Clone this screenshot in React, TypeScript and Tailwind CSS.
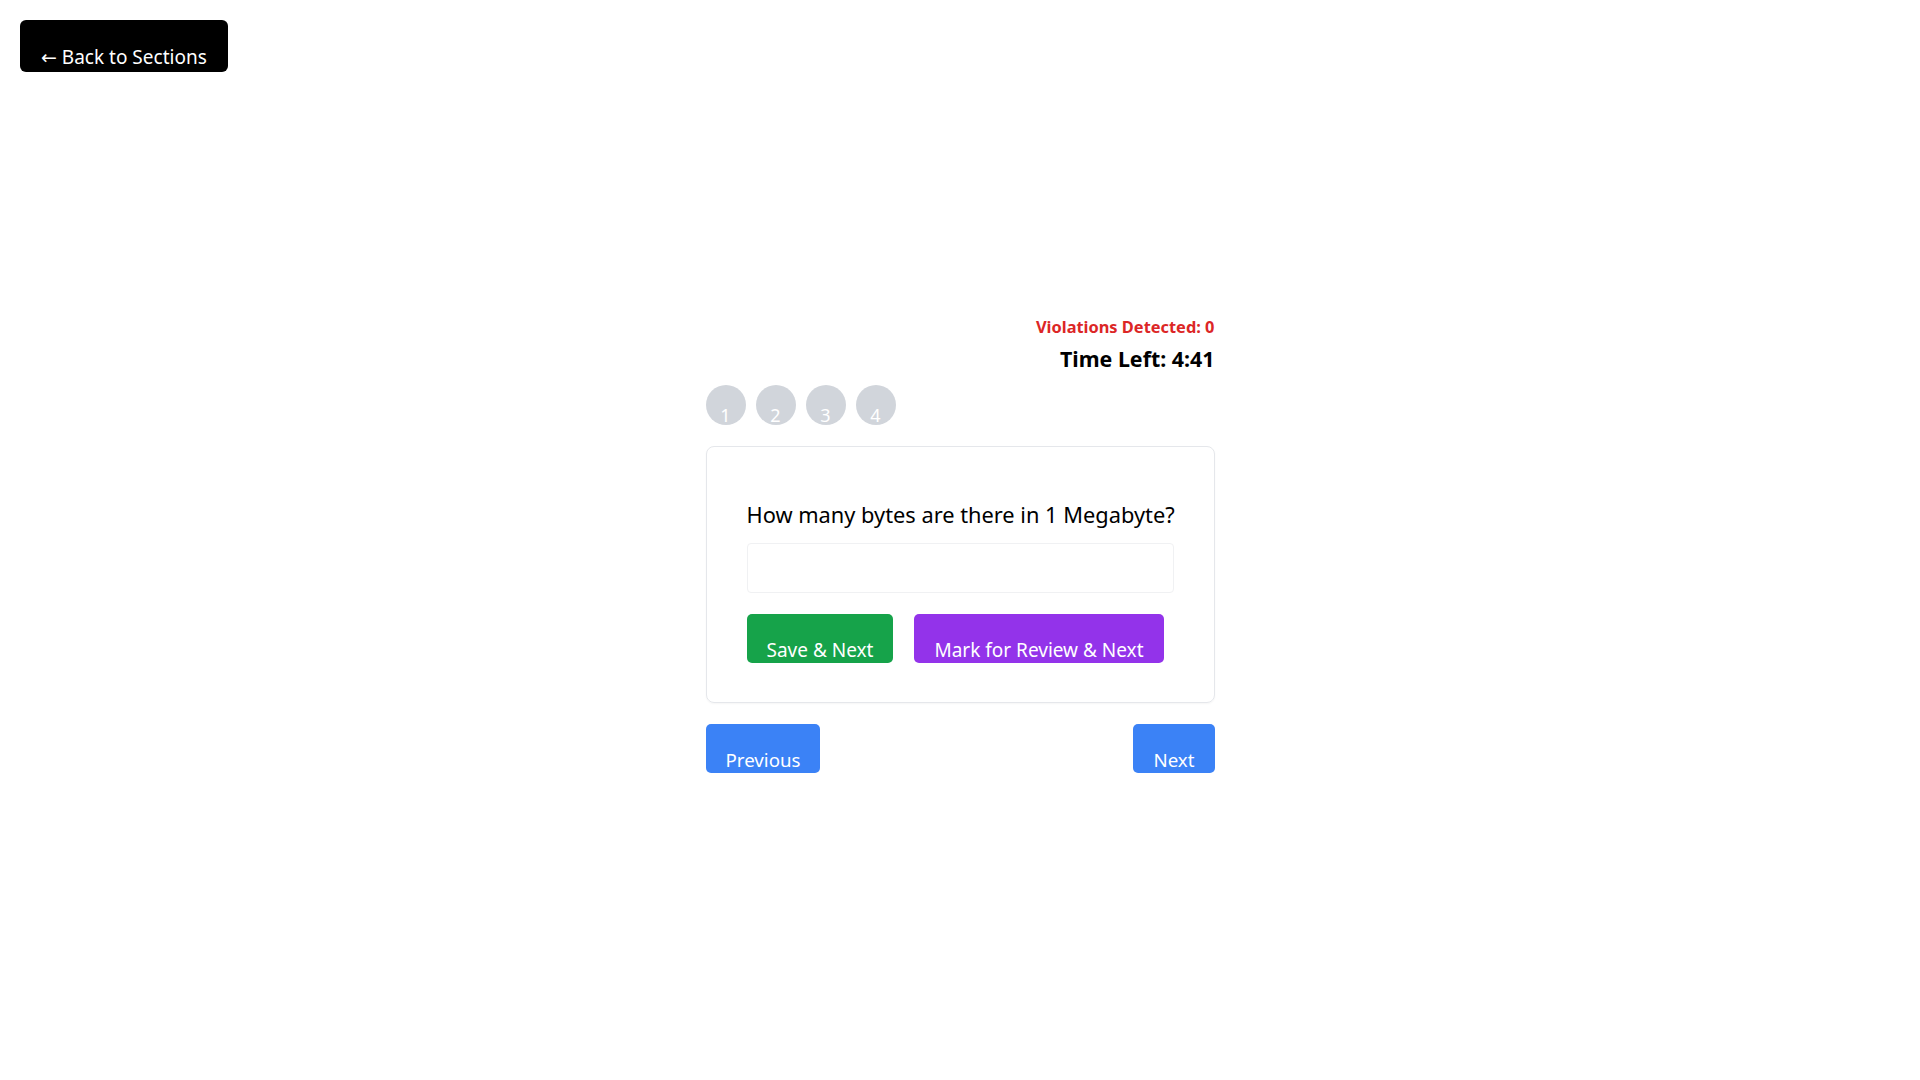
import React from "react";

export default function App() {
  return (
    <div className="min-h-screen bg-white font-['Noto_Sans',sans-serif] text-black">
      <div className="px-5 pt-5">
        <button className="h-[52px] whitespace-nowrap rounded-[6px] bg-black px-[21px] pt-[22px] text-[19px] leading-[20px] text-white">
          <span className="font-['DejaVu_Sans',sans-serif] text-[19px]">←</span> Back to Sections
        </button>
      </div>
      <div className="mx-auto mt-[243px] flex w-[509px] flex-col">
        <div className="text-right text-[16.4px] font-bold leading-[24px] text-[#dc2626]">
          Violations Detected: 0
        </div>
        <div className="mt-[5px] text-right text-[21.4px] font-bold leading-[30px]">
          Time Left: 4:41
        </div>
        <div className="mt-[11px] flex gap-[10px]">
          {[1, 2, 3, 4].map((n) => (
            <div
              key={n}
              className="h-10 w-10 rounded-full bg-[#d1d5db] pt-[20px] text-center text-[18px] leading-[20px] text-white"
            >
              {n}
            </div>
          ))}
        </div>
        <div className="mt-[21px] rounded-[8px] border border-[#e5e7eb] px-10 pb-[39px] pt-[40px] shadow-[0_1px_2px_rgba(0,0,0,0.04)]">
          <div className="mt-[11px] whitespace-nowrap text-[21.8px] leading-[34px]">
            How many bytes are there in 1 Megabyte?
          </div>
          <input
            type="text"
            className="mt-[11px] block h-[50px] w-full rounded-[4px] border border-[#f0f1f3] px-3 text-[20px] outline-none"
          />
          <div className="mt-[21px] flex gap-[21px]">
            <button className="h-[49px] whitespace-nowrap rounded-[5px] bg-[#16a34a] px-5 pt-[22px] text-[19px] leading-[20px] text-white">
              Save &amp; Next
            </button>
            <button className="h-[49px] whitespace-nowrap rounded-[5px] bg-[#9333ea] px-5 pt-[22px] text-[19px] leading-[20px] text-white">
              Mark for Review &amp; Next
            </button>
          </div>
        </div>
        <div className="mt-[21px] flex justify-between">
          <button className="h-[49px] whitespace-nowrap rounded-[5px] bg-[#3b82f6] px-5 pt-[23px] text-[18.7px] leading-[20px] text-white">
            Previous
          </button>
          <button className="h-[49px] whitespace-nowrap rounded-[5px] bg-[#3b82f6] px-5 pt-[23px] text-[18.7px] leading-[20px] text-white">
            Next
          </button>
        </div>
      </div>
    </div>
  );
}
